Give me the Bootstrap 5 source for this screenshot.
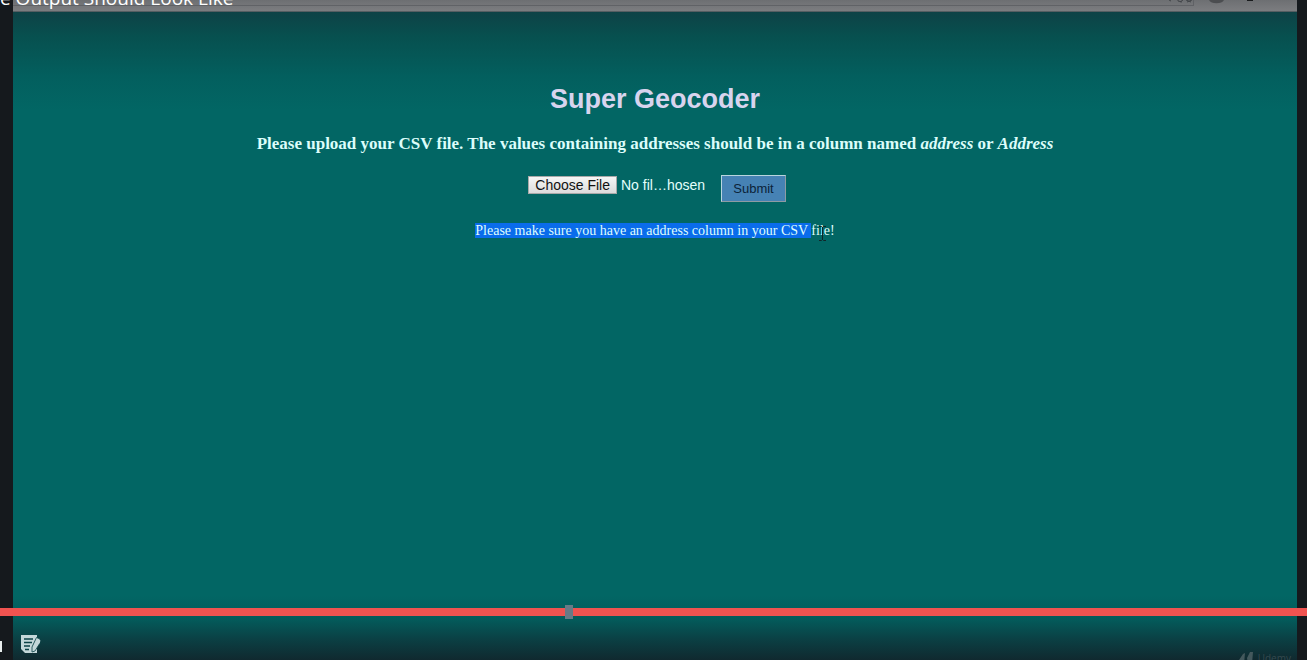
<!DOCTYPE html>
<html lang="en">
<head>
<meta charset="utf-8">
<meta name="viewport" content="width=device-width, initial-scale=1">
<title>Super Geocoder</title>
<link href="https://cdn.jsdelivr.net/npm/bootstrap@5.3.0/dist/css/bootstrap.min.css" rel="stylesheet">
<style>
  body { background: #15191d; font-family: "Liberation Serif", serif; }
  .player { padding: 0 10px 0 13px; }
  .stage {
    background:
      linear-gradient(#0e4246 12px, #07504f 36px, #035f5e 76px, transparent 110px),
      linear-gradient(to top, #10292f 0, #0b3f43 20px, #045a5a 40px, transparent 64px),
      #026664;
  }
  .browser-edge { height: 12px; background: linear-gradient(#6d6f72, #7c7d80); border-bottom: 1px solid #565e62; }
  .address-edge { width: 92%; height: 6px; border: solid #606266; border-width: 0 1px 1px 0; }
  .lecture-title { left: 0; top: -15px; font: 19px/26px "Open Sans", sans-serif; color: #fff; }
  .site-title { font: bold 27px/34px "Liberation Sans", sans-serif; color: #d8d4ee; margin: 70px 0 17px; }
  .lead-line { font-size: 17px; line-height: 22px; font-weight: bold; color: #dcfdfa; margin-bottom: 20px; }
  .file-field { width: 177px; font: 14px/20px "Liberation Sans", sans-serif; color: #e4fffc; }
  .file-field::file-selector-button {
    font: 14px/16px "Liberation Sans", sans-serif; color: #111; padding: 0 6px; margin-right: 4px;
    border: 1px solid #a9a9a9; border-radius: 0; background: linear-gradient(#f6f6f6, #dcdcdc);
  }
  .submit-button {
    font: 13px/25px "Liberation Sans", sans-serif; color: #0b2239; background: #4682b4;
    border: 1px solid; border-color: #b9d6df #8e9ba3 #8e9ba3 #b9d6df; padding: 0 11px;
  }
  .notice { font-size: 14px; line-height: 16px; color: #dffcfb; margin-top: 21px; }
  .selected-text { background: #0a6ceb; }
  .ibeam { left: 7px; top: 2px; }
  .seek { height: 8px; background: #ef5350; }
  .seek-handle { width: 8px; height: 14px; top: -3px; background: #687a86; }
  .controls { height: 44px; }
  .control-edge { width: 2px; height: 11px; background: #e8eded; margin-top: 16px; }
  .note-button { margin: 12px 0 0 18px; padding: 0; color: #c3d7d9; }
  .brand { font: 10px/12px "Open Sans", sans-serif; color: #34494e; right: 16px; bottom: -4px; }
</style>
</head>
<body>
<div class="player d-flex flex-column min-vh-100 position-relative overflow-hidden">
  <div class="stage flex-grow-1 d-flex flex-column">
    <div class="browser-edge position-relative">
      <div class="address-edge"></div>
      <svg class="position-absolute top-0 end-0" width="140" height="8" viewBox="0 0 140 8" fill="none" stroke="#424549" aria-hidden="true">
        <path d="M12 0l2 1M21 0v1l4 1M26 0l-3 2M29 0l5 2M35 0l-5 2"/>
        <path d="M52 0a8 5 0 0 0 15 0z" fill="#4b4d50" stroke="none"/>
        <path d="M90 0h6" stroke="#191b1d" stroke-width="2"/>
      </svg>
    </div>
    <main class="text-center">
      <h1 class="site-title">Super Geocoder</h1>
      <p class="lead-line">Please upload your CSV file. The values containing addresses should be in a column named <em>address</em> or <em>Address</em></p>
      <form class="d-flex justify-content-center align-items-start gap-3 ps-1">
        <input class="file-field" type="file" aria-label="CSV file">
        <button class="submit-button" type="button">Submit</button>
      </form>
      <p class="notice"><span class="selected-text">Please make sure you have an address column in your CSV </span><span class="position-relative">file!<svg class="ibeam position-absolute" width="9" height="17" viewBox="0 0 9 17" fill="none" stroke="#102529" aria-hidden="true"><path d="M1 1.5h2.5l1 1 1-1H8M4.500 2v13M1 15.500h2.500l1-1 1 1H8"/></svg></span></p>
    </main>
  </div>
  <div class="position-absolute bottom-0 start-0 w-100">
    <div class="seek position-relative"><div class="seek-handle position-absolute" style="left:43.2%"></div></div>
    <div class="controls d-flex align-items-center position-relative overflow-hidden">
      <div class="control-edge"></div>
      <button class="note-button btn border-0 d-flex" type="button" aria-label="Notes">
        <svg width="22" height="20" viewBox="0 0 22 20" aria-hidden="true">
          <path d="M1 1h16v3l-4 7-1 5h3l2-2v5H5l-4-4z" fill="currentColor"/>
          <path d="M4 5h9M4 8.500h8M4 12h6M5 15.500h4" stroke="#0b4246" stroke-width="1.500"/>
          <path d="M16.500 3.500l3.500 1.500v4l-5 8-3 1v-5z" fill="currentColor" stroke="#0b4246" stroke-width=".8"/>
          <path d="M17.500 5l3 1.500-1 3-2.500-1.500z" fill="currentColor"/>
        </svg>
      </button>
      <div class="brand position-absolute d-flex align-items-end gap-1">
        <svg width="16" height="14" viewBox="0 0 16 14" aria-hidden="true"><path d="M1 10L5 4l2-1-1 11H2zM9 8l3-6h3l-1 12h-4z" fill="#43585c"/></svg>
        <span>Udemy</span>
      </div>
    </div>
  </div>
  <div class="lecture-title position-absolute text-nowrap">e Output Should Look Like</div>
</div>
<script src="https://cdn.jsdelivr.net/npm/bootstrap@5.3.0/dist/js/bootstrap.bundle.min.js"></script>
</body>
</html>
